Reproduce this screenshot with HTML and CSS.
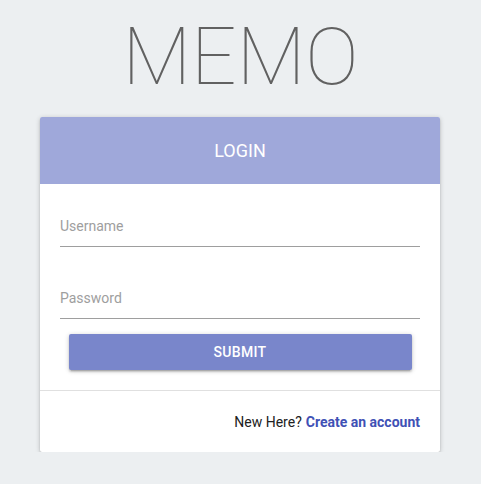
FILE: index.html
```html
<!DOCTYPE html>
<html lang="en">
<head>
<meta charset="utf-8">
<title>Memo Login</title>
<link rel="stylesheet" href="styles.css">
</head>
<body>
<main class="page">
  <h1 class="brand">MEMO</h1>
  <section class="card">
    <header class="card-header">LOGIN</header>
    <form class="card-body">
      <div class="field"><input type="text" placeholder="Username"></div>
      <div class="field"><input type="password" placeholder="Password"></div>
      <button type="button" class="btn">SUBMIT</button>
    </form>
    <footer class="card-footer">
      <span class="muted">New Here?</span> <a class="link" href="#">Create an account</a>
    </footer>
  </section>
</main>
</body>
</html>
```
FILE: styles.css
```css
* { box-sizing: border-box; }
html, body {
  margin: 0;
  padding: 0;
  background: #eceff1;
  font-family: Roboto, "Noto Sans", sans-serif;
  font-size: 14px;
}
.page {
  display: flex;
  flex-direction: column;
  align-items: center;
  padding-top: 17px;
}
.brand {
  margin: 0;
  font-size: 80px;
  line-height: 80px;
  font-weight: 100;
  color: #616161;
  letter-spacing: 0;
}
.card {
  margin-top: 20px;
  margin-right: 1px;
  width: 400px;
  background: #fff;
  border-radius: 2px;
  box-shadow: 0 2px 2px 0 rgba(0,0,0,.14), 0 3px 1px -2px rgba(0,0,0,.12), 0 1px 5px 0 rgba(0,0,0,.2);
}
.card-header {
  height: 67px;
  background: #9fa8da;
  color: #fff;
  font-size: 18px;
  display: flex;
  align-items: center;
  justify-content: center;
  border-radius: 2px 2px 0 0;
}
.card-body {
  padding: 21px 20px 20px;
  display: flex;
  flex-direction: column;
  margin: 0;
}
.field + .field { margin-top: 30px; }
.field input {
  display: block;
  width: 100%;
  height: 42px;
  border: none;
  border-bottom: 1px solid #9e9e9e;
  outline: none;
  padding: 0;
  font: inherit;
  font-size: 14px;
  color: #212121;
  background: transparent;
}
.field input::placeholder { color: #9e9e9e; }
.btn {
  margin: 15px auto 0;
  width: 343px;
  height: 36px;
  border: none;
  border-radius: 2px;
  background: #7986cb;
  color: #fff;
  font: inherit;
  font-size: 14px;
  font-weight: 500;
  letter-spacing: .3px;
  box-shadow: 0 2px 2px 0 rgba(0,0,0,.14), 0 3px 1px -2px rgba(0,0,0,.12), 0 1px 5px 0 rgba(0,0,0,.2);
}
.card-footer {
  border-top: 1px solid #e0e0e0;
  padding: 0 20px;
  height: 62px;
  display: flex;
  align-items: center;
  justify-content: flex-end;
  gap: 4px;
  font-size: 14px;
}
.muted { color: #212121; }
.link {
  color: #3f51b5;
  font-weight: 700;
  text-decoration: none;
}
```
